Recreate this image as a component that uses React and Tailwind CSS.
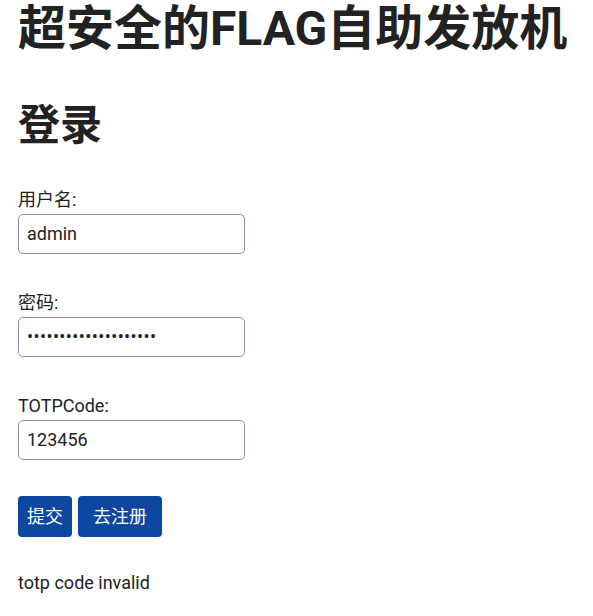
import React from "react";

const font = { fontFamily: "Roboto, 'Noto Sans CJK SC', sans-serif" };

const Field = ({ label, type = "text", value, className = "", inputClass = "" }) => (
  <div className={className}>
    <label className="block text-[18px] leading-6 text-[#222]">{label}</label>
    <input
      type={type}
      defaultValue={value}
      className={`mt-[2px] block h-10 w-[227px] rounded-[5px] border border-[#8b8fa3] bg-white px-[8px] text-[18px] text-[#222] outline-none ${inputClass}`}
    />
  </div>
);

export default function App() {
  return (
    <div className="min-h-screen bg-white pl-[18px] text-[#222]" style={font}>
      <h1 className="text-[48px] font-bold leading-[1.2]">超安全的FLAG自助发放机</h1>
      <h2 className="mt-[43px] text-[42px] font-bold leading-[1.2]">登录</h2>

      <form className="mt-[37px]">
        <Field label="用户名:" value="admin" />
        <Field
          label="密码:"
          type="password"
          value="aaaaaaaaaaaaaaaaaaaa"
          className="mt-[37px]"
          inputClass="tracking-[0.4px]"
        />
        <Field label="TOTPCode:" value="123456" className="mt-[37px]" />

        <div className="mt-[36px] flex gap-[6px]">
          <button
            type="button"
            className="h-[41px] rounded-[4px] bg-[#0d47a1] px-[9px] text-[18px] text-white"
          >
            提交
          </button>
          <button
            type="button"
            className="h-[41px] rounded-[4px] bg-[#0d47a1] px-[15px] text-[18px] text-white"
          >
            去注册
          </button>
        </div>
      </form>

      <p className="mt-[34px] text-[18px] leading-6">totp code invalid</p>
    </div>
  );
}
